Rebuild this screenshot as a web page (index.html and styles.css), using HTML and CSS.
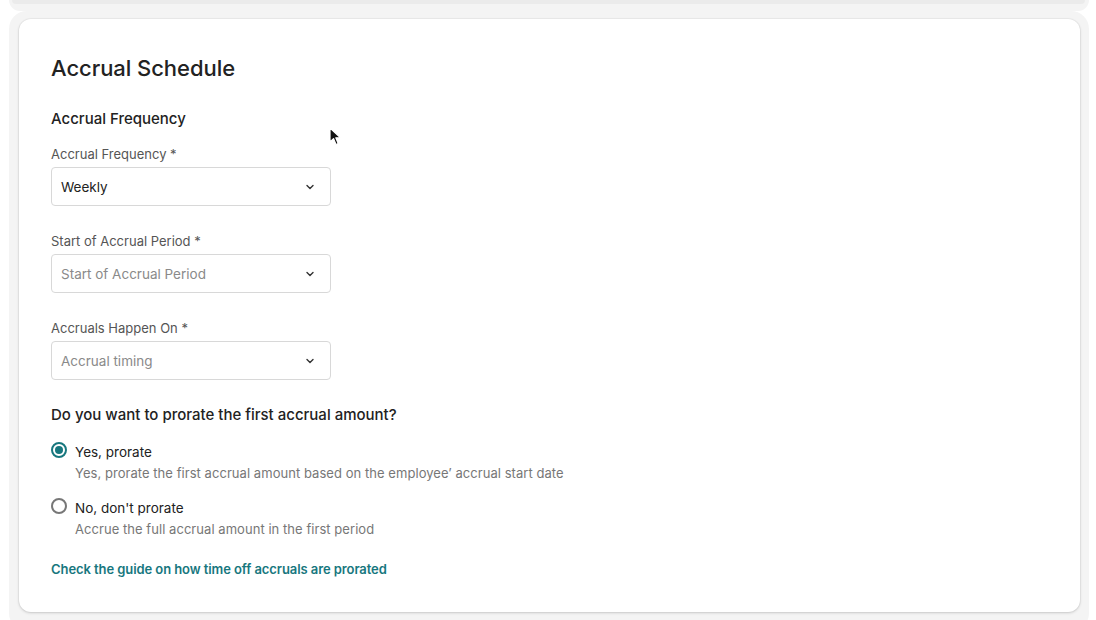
FILE: index.html
```html
<!DOCTYPE html>
<html lang="en">
<head>
<meta charset="utf-8">
<title>Accrual Schedule</title>
<link rel="stylesheet" href="styles.css">
</head>
<body>
<div class="stack">
  <div class="prev-frame"><div class="prev-card"></div></div>
  <div class="frame">
    <section class="card">
      <h1 class="card-title">Accrual Schedule</h1>

      <h2 class="section-title">Accrual Frequency</h2>

      <div class="field">
        <label class="field-label">Accrual Frequency *</label>
        <div class="select">
          <span class="select-value">Weekly</span>
          <svg class="chevron" width="10" height="6" viewBox="0 0 10 6"><path d="M2 1.5 L5 4.5 L8 1.5" fill="none" stroke="#333" stroke-width="1.4" stroke-linecap="round" stroke-linejoin="round"/></svg>
        </div>
      </div>

      <div class="field">
        <label class="field-label">Start of Accrual Period *</label>
        <div class="select">
          <span class="select-value placeholder">Start of Accrual Period</span>
          <svg class="chevron" width="10" height="6" viewBox="0 0 10 6"><path d="M2 1.5 L5 4.5 L8 1.5" fill="none" stroke="#333" stroke-width="1.4" stroke-linecap="round" stroke-linejoin="round"/></svg>
        </div>
      </div>

      <div class="field">
        <label class="field-label">Accruals Happen On *</label>
        <div class="select">
          <span class="select-value placeholder">Accrual timing</span>
          <svg class="chevron" width="10" height="6" viewBox="0 0 10 6"><path d="M2 1.5 L5 4.5 L8 1.5" fill="none" stroke="#333" stroke-width="1.4" stroke-linecap="round" stroke-linejoin="round"/></svg>
        </div>
      </div>

      <h2 class="question">Do you want to prorate the first accrual amount?</h2>

      <div class="options">
        <div class="option">
          <span class="radio checked"></span>
          <div class="option-text">
            <div class="option-label">Yes, prorate</div>
            <div class="option-desc">Yes, prorate the first accrual amount based on the employee’ accrual start date</div>
          </div>
        </div>
        <div class="option">
          <span class="radio"></span>
          <div class="option-text">
            <div class="option-label">No, don't prorate</div>
            <div class="option-desc">Accrue the full accrual amount in the first period</div>
          </div>
        </div>
      </div>

      <a class="guide-link" href="#">Check the guide on how time off accruals are prorated</a>
    </section>
  </div>
</div>

<svg class="cursor" width="14" height="20" viewBox="0 0 14 20">
  <path d="M1 1 L1 15 L4.5 11.6 L7 17.5 L9.2 16.6 L6.8 10.8 L11.5 10.8 Z" fill="#111" stroke="#fff" stroke-width="1.2" stroke-linejoin="round"/>
</svg>
</body>
</html>
```

FILE: styles.css
```css
* {
  box-sizing: border-box;
}

html, body {
  margin: 0;
  padding: 0;
  background: #ffffff;
  height: 620px;
  overflow: hidden;
}

body {
  font-family: Inter, "Liberation Sans", Arial, sans-serif;
  color: #222;
  position: relative;
}

.stack {
  display: flex;
  flex-direction: column;
  padding: 0 7px 0 9px;
}

/* tail of the card above */
.prev-frame {
  height: 11px;
  background: #f4f4f4;
  border-radius: 0 0 18px 18px;
  padding: 0 4px 0 3px;
}

.prev-card {
  height: 4px;
  background: #ebebeb;
  border-radius: 0 0 12px 12px;
}

.frame {
  background: #f4f4f4;
  border-radius: 18px;
  padding: 8px 9px 8px 10px;
  height: 620px;
}

.card {
  background: #fff;
  border-radius: 12px;
  box-shadow: 0 1px 3px rgba(0, 0, 0, 0.16), 0 0 0 1px rgba(0, 0, 0, 0.03);
  height: 593px;
  padding: 36px 32px 0 32px;
  display: flex;
  flex-direction: column;
  align-items: flex-start;
}

.card-title {
  margin: 0;
  font-size: 22px;
  font-weight: 500;
  line-height: 26px;
  color: #222;
  letter-spacing: -0.05px;
}

.section-title {
  margin: 28px 0 0;
  font-size: 15px;
  font-weight: 500;
  line-height: 20px;
  color: #222;
}

.field {
  display: flex;
  flex-direction: column;
  margin-top: 17px;
}

.field + .field {
  margin-top: 27px;
}

.field-label {
  font-size: 13px;
  line-height: 16px;
  color: #555;
  margin-bottom: 5px;
}

.select {
  width: 280px;
  height: 39px;
  border: 1px solid #d8d8d8;
  border-radius: 4px;
  display: flex;
  align-items: center;
  justify-content: space-between;
  padding: 0 15px 0 9px;
}

.select-value {
  font-size: 13.5px;
  color: #222;
}

.select-value.placeholder {
  color: #8a8a8a;
}

.chevron {
  display: block;
}

.question {
  margin: 25px 0 0;
  font-size: 15px;
  font-weight: 500;
  line-height: 20px;
  color: #222;
}

.options {
  display: flex;
  flex-direction: column;
  gap: 16px;
  margin-top: 17px;
}

.option {
  display: flex;
  gap: 8px;
  align-items: flex-start;
}

.radio {
  width: 16px;
  height: 16px;
  border-radius: 50%;
  border: 2px solid #777;
  flex: none;
  position: relative;
}

.radio.checked {
  border-color: #17777e;
}

.radio.checked::after {
  content: "";
  position: absolute;
  left: 2px;
  top: 2px;
  width: 8px;
  height: 8px;
  border-radius: 50%;
  background: #17777e;
}

.option-text {
  display: flex;
  flex-direction: column;
  gap: 4px;
}

.option-label {
  font-size: 13.5px;
  line-height: 17px;
  color: #222;
  margin-top: 2px;
}

.option-desc {
  font-size: 13px;
  line-height: 17px;
  color: #777;
  letter-spacing: 0.05px;
}

.guide-link {
  margin-top: 23px;
  font-size: 13px;
  font-weight: 600;
  line-height: 17px;
  color: #17777e;
  text-decoration: none;
  letter-spacing: -0.08px;
}

.cursor {
  position: absolute;
  left: 329px;
  top: 127px;
}
```
